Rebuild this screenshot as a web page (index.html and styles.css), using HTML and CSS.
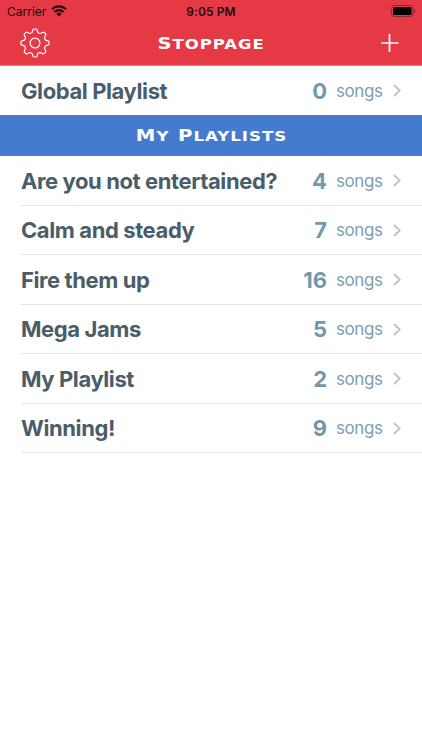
FILE: index.html
```html
<!DOCTYPE html>
<html lang="en">
<head>
  <meta charset="UTF-8">
  <meta name="viewport" content="width=device-width, initial-scale=1.0">
  <link rel="stylesheet" href="styles.css">
  <title>Stoppage</title>
</head>
<body>
  <header class="header">
    <div class="status-bar">
      <div class="carrier">
        <span>Carrier</span>
        <svg class="wifi" viewBox="0 0 16 12">
          <path d="M1 4.2a10.2 10.2 0 0 1 14 0M3.4 6.9a6.8 6.8 0 0 1 9.2 0" fill="none" stroke="#240a0d" stroke-width="2.1"/>
          <path d="M8 11.5 5.3 8.8a4 4 0 0 1 5.4 0z" fill="#240a0d"/>
        </svg>
      </div>
      <div class="time">9:05 PM</div>
      <svg class="battery" viewBox="0 0 26 12">
        <rect x=".5" y=".5" width="21.5" height="11" rx="3" fill="none" stroke="#8f252f"/>
        <rect x="2" y="2" width="18.5" height="8" rx="1.6" fill="#000"/>
        <path d="M23.3 4v4c1.6-.7 1.6-3.3 0-4z" fill="#8f252f"/>
      </svg>
    </div>
    <div class="nav-bar">
      <svg class="gear" viewBox="-15 -15 30 30">
        <path d="M-2.8-10.6L-2.1-13Q-1.9-14-1-14H1Q1.9-14 2.1-13L2.8-10.6Q4-9.5 5.5-9.5L7.7-10.7Q8.5-11.2 9.2-10.6L10.6-9.2Q11.2-8.5 10.7-7.7L9.5-5.5Q9.5-4 10.6-2.8L13-2.1Q14-1.9 14-1V1Q14 1.9 13 2.1L10.6 2.8Q9.5 4 9.5 5.5L10.7 7.7Q11.2 8.5 10.6 9.2L9.2 10.6Q8.5 11.2 7.7 10.7L5.5 9.5Q4 9.5 2.8 10.6L2.1 13Q1.9 14 1 14H-1Q-1.9 14-2.1 13L-2.8 10.6Q-4 9.5-5.5 9.5L-7.7 10.7Q-8.5 11.2-9.2 10.6L-10.6 9.2Q-11.2 8.5-10.7 7.7L-9.5 5.5Q-9.5 4-10.6 2.8L-13 2.1Q-14 1.9-14 1V-1Q-14-1.9-13-2.1L-10.6-2.8Q-9.5-4-9.5-5.5L-10.7-7.7Q-11.2-8.5-10.6-9.2L-9.2-10.6Q-8.5-11.2-7.7-10.7L-5.5-9.5Q-4-9.5-2.8-10.6Z"/>
        <circle r="4.9"/>
      </svg>
      <h1 class="title engraved"><span class="word">Stoppage</span></h1>
      <svg class="plus" viewBox="0 0 18 18">
        <path d="M8.500 0v18M0 9h17.500"/>
      </svg>
    </div>
  </header>

  <div class="row global">
    <span class="name">Global Playlist</span>
    <span class="count">0</span>
    <span class="songs">songs</span>
    <svg class="chevron" viewBox="0 0 8 13"><path d="M1 1l5.7 5.5L1 12"/></svg>
  </div>

  <div class="section">
    <h2 class="section-title engraved"><span class="word">My</span><span class="word">Playlists</span></h2>
  </div>

  <div class="playlists">
    <div class="row">
      <span class="name">Are you not entertained?</span>
      <span class="count">4</span>
      <span class="songs">songs</span>
      <svg class="chevron" viewBox="0 0 8 13"><path d="M1 1l5.7 5.5L1 12"/></svg>
    </div>
    <div class="row">
      <span class="name">Calm and steady</span>
      <span class="count">7</span>
      <span class="songs">songs</span>
      <svg class="chevron" viewBox="0 0 8 13"><path d="M1 1l5.7 5.5L1 12"/></svg>
    </div>
    <div class="row">
      <span class="name">Fire them up</span>
      <span class="count">16</span>
      <span class="songs">songs</span>
      <svg class="chevron" viewBox="0 0 8 13"><path d="M1 1l5.7 5.5L1 12"/></svg>
    </div>
    <div class="row">
      <span class="name">Mega Jams</span>
      <span class="count">5</span>
      <span class="songs">songs</span>
      <svg class="chevron" viewBox="0 0 8 13"><path d="M1 1l5.7 5.5L1 12"/></svg>
    </div>
    <div class="row">
      <span class="name">My Playlist</span>
      <span class="count">2</span>
      <span class="songs">songs</span>
      <svg class="chevron" viewBox="0 0 8 13"><path d="M1 1l5.7 5.5L1 12"/></svg>
    </div>
    <div class="row">
      <span class="name">Winning!</span>
      <span class="count">9</span>
      <span class="songs">songs</span>
      <svg class="chevron" viewBox="0 0 8 13"><path d="M1 1l5.7 5.5L1 12"/></svg>
    </div>
  </div>
</body>
</html>
```
FILE: styles.css
```css
* {
  box-sizing: border-box;
}

body {
  margin: 0;
  background-color: #fff;
  font-family: Inter, "Liberation Sans", sans-serif;
}

.header {
  height: 66px;
  background-color: #e63946;
  border-bottom: 1px solid #eb7d87;
}

.status-bar {
  display: grid;
  grid-template-columns: 1fr auto 1fr;
  align-items: center;
  height: 22px;
  padding: 0 5px 0 7px;
  color: #240a0d;
  font-size: 12px;
}

.carrier {
  display: flex;
  align-items: center;
  gap: 5px;
}

.wifi {
  width: 16px;
  height: 12px;
}

.time {
  padding-right: 2px;
  font-weight: 600;
  letter-spacing: 0.1px;
}

.battery {
  justify-self: end;
  width: 26px;
  height: 12px;
}

.nav-bar {
  display: grid;
  grid-template-columns: 1fr auto 1fr;
  align-items: center;
  height: 42px;
  padding: 0 23px 0 20px;
}

.gear {
  width: 30px;
  height: 30px;
  fill: none;
  stroke: #fff;
  stroke-width: 1.2;
}

.plus {
  justify-self: end;
  width: 18px;
  height: 18px;
  fill: none;
  stroke: #fff;
  stroke-width: 1.7;
}

.engraved {
  margin: 0;
  color: #fff;
  font-family: "DejaVu Sans", sans-serif;
  font-size: 13.5px;
  font-weight: bold;
  line-height: 20px;
  letter-spacing: 0.8px;
  text-transform: uppercase;
}

.word {
  display: inline-block;
}

.word::first-letter {
  font-size: 16px;
}

.title {
  padding: 2px 0 0 2px;
  transform: scaleX(1.22);
}

.row {
  display: flex;
  align-items: center;
  height: 49.5px;
  margin-left: 21px;
  padding: 1px 21px 0 0;
  border-bottom: 1px solid #e4e4e6;
}

.global {
  height: 49px;
  padding-top: 0;
  border-bottom: none;
}

.name {
  flex: 1;
  color: #4a5d6b;
  font-size: 22px;
  font-weight: 700;
  letter-spacing: -0.4px;
}

.count {
  color: #7299ab;
  font-size: 22px;
  font-weight: 700;
}

.songs {
  width: 47px;
  margin: 0 10px 0 9px;
  color: #7ba0b0;
  font-size: 17px;
  letter-spacing: -0.4px;
}

.chevron {
  width: 8px;
  height: 13px;
  fill: none;
  stroke: #c2c2c5;
  stroke-width: 1.8;
}

.section {
  display: flex;
  justify-content: center;
  align-items: center;
  height: 41px;
  padding-left: 1px;
  background-color: #457bcd;
}

.section-title {
  display: flex;
  gap: 7px;
  padding-top: 1px;
  transform: scaleX(1.23);
}
```
